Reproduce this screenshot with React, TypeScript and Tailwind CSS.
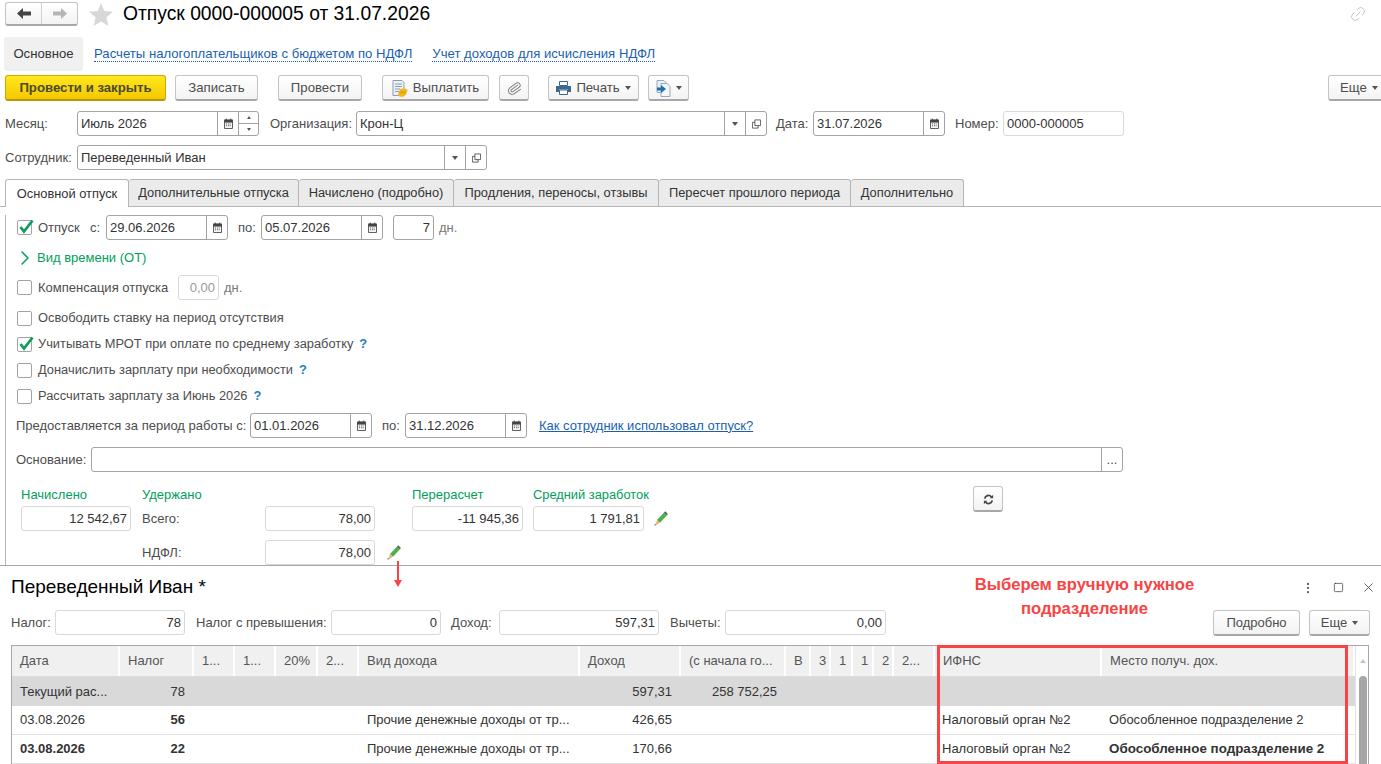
import type { ReactNode } from 'react'
import { MoreVertical, Paperclip, Square, X, Link2, ChevronRight } from 'lucide-react'

function Caret() {
  return <span className="inline-block w-0 h-0 border-x-[3px] border-x-transparent border-t-[4px] border-t-[#555]" />
}

function CalendarIcon() {
  return (
    <svg width="9" height="11" viewBox="0 0 10 12">
      <path d="M.5 2h9v9.500h-9z" fill="#fff" stroke="#444" />
      <path d="M.5 2h9v3h-9z" fill="#444" />
      <path d="M2.500 .5v2M7.500 .5v2" stroke="#444" />
      <path d="M2 6.500h1.500M4.500 6.500h1.500M7 6.500h1M2 8.500h1.500M4.500 8.500h1.500M7 8.500h1" stroke="#444" />
    </svg>
  )
}

function OpenIcon() {
  return (
    <svg width="9" height="10" viewBox="0 0 11 11" fill="none" stroke="#444">
      <path d="M3.500 .5h7v7h-7z" />
      <path d="M3.500 3.500h-3v7h7v-3" />
    </svg>
  )
}

function PencilIcon() {
  return (
    <svg width="14" height="15" viewBox="0 0 14 15">
      <path d="M3 9L10 1.500l3 2.700-7 7.500z" fill="#4caf50" />
      <path d="M10 1.500l1.200-1.200 2.600 2.600-.8 1.300z" fill="#555" />
      <path d="M3 9l3 2.700-4.600 2.500z" fill="#e8b26a" />
      <path d="M.9 13l1.400 1-1.800.5z" fill="#333" />
    </svg>
  )
}

function Field({
  w,
  value,
  right,
  disabled,
  plain,
  children,
}: {
  w: number
  value?: string
  right?: boolean
  disabled?: boolean
  plain?: boolean
  children?: ReactNode
}) {
  return (
    <div
      style={{ width: w }}
      className={`h-[25px] shrink-0 flex rounded-[3px] border bg-white ${plain || disabled ? 'border-[#d9d9d9]' : 'border-[#a3a3a3]'}`}
    >
      <div
        className={`flex-1 min-w-0 px-[3px] leading-[23px] whitespace-nowrap overflow-hidden ${right ? 'text-right' : ''} ${disabled ? 'text-[#999]' : 'text-[#333]'}`}
      >
        {value}
      </div>
      {children}
    </div>
  )
}

function FieldBtn({ children, w = 21 }: { children: ReactNode; w?: number }) {
  return <div style={{ width: w }} className="shrink-0 border-l border-[#a3a3a3] flex items-center justify-center">{children}</div>
}

function DateField({ w, value }: { w: number; value: string }) {
  return (
    <Field w={w} value={value}>
      <FieldBtn><CalendarIcon /></FieldBtn>
    </Field>
  )
}

function Btn({
  w,
  children,
  primary,
}: {
  w: number
  children: ReactNode
  primary?: boolean
}) {
  return (
    <div
      style={{ width: w }}
      className={`h-[26px] pt-px shrink-0 flex items-center justify-center gap-[5px] rounded-[3px] border border-b-2 ${
        primary
          ? 'bg-gradient-to-b from-[#ffe81c] to-[#f5c800] border-[#cfa800] border-b-[#b8970a] font-bold text-[#4a4a2a]'
          : 'bg-gradient-to-b from-white to-[#f3f3f3] border-[#c4c4c4] border-b-[#a8a8a8] text-[#4d4d4d]'
      }`}
    >
      {children}
    </div>
  )
}

function Check({ checked }: { checked?: boolean }) {
  return (
    <div className="relative w-[15px] h-[15px] shrink-0 rounded-[2px] border border-[#a3a3a3] bg-white">
      {checked && (
        <svg className="absolute left-[1px] top-[-2px]" width="15" height="15" viewBox="0 0 15 15" fill="none" stroke="#0f9d58" strokeWidth="2.800">
          <path d="M1.500 8l3.500 4.500L13.500 1.500" />
        </svg>
      )}
    </div>
  )
}

function CheckRow({ h, checked, label, hint }: { h: number; checked?: boolean; label: string; hint?: boolean }) {
  return (
    <div style={{ height: h }} className="flex items-center pl-[12px] text-[12.85px] text-[#4d4d4d]">
      <Check checked={checked} />
      <span className="ml-[6px]">{label}</span>
      {hint && <span className="ml-[6px] font-bold text-[#1a7fc1]">?</span>}
    </div>
  )
}

const columns = 'grid grid-cols-[108px_74px_41px_41px_42px_41px_221px_101px_105px_25px_20px_22px_21px_20px_41px_167px_253px]'

const headers = ['Дата', 'Налог', '1...', '1...', '20%', '2...', 'Вид дохода', 'Доход', '(с начала го...', 'В', '3', '1', '1', '2', '2...', 'ИФНС', 'Место получ. дох.']

function Cell({ children, right, bold, tight }: { children?: ReactNode; right?: boolean; bold?: boolean; tight?: boolean }) {
  return (
    <div className={`min-w-0 whitespace-nowrap overflow-hidden ${tight ? 'pl-[7px]' : 'pl-[8px]'} ${right ? 'text-right pr-[9px]' : ''} ${bold ? 'font-bold' : ''}`}>
      {children}
    </div>
  )
}

function DataRow({ boldDate, boldPlace, tax, income }: { boldDate?: boolean; boldPlace?: boolean; tax: string; income: string }) {
  return (
    <div className={`${columns} h-[29px] items-center border-b border-[#e3e3e3] text-[#333]`}>
      <Cell bold={boldDate}>03.08.2026</Cell>
      <Cell right bold>{tax}</Cell>
      <Cell /><Cell /><Cell /><Cell />
      <Cell>Прочие денежные доходы от тр...</Cell>
      <Cell right>{income}</Cell>
      <Cell /><Cell /><Cell /><Cell /><Cell /><Cell /><Cell />
      <Cell tight>Налоговый орган №2</Cell>
      <Cell tight bold={boldPlace}>
        <span className={boldPlace ? 'text-[13.4px]' : 'text-[12.9px]'}>Обособленное подразделение 2</span>
      </Cell>
    </div>
  )
}

export default function App() {
  return (
    <div className="relative w-[1381px] h-[764px] overflow-hidden bg-white text-[13px] font-['Liberation_Sans',Arial,sans-serif] text-[#4d4d4d]">
      <div className="h-[565px] overflow-hidden">
        {/* заголовок */}
        <div className="h-[24px] mt-[2px] flex items-center pl-[5px] pr-[14px]">
          <div className="w-[73px] h-[24px] flex rounded-[3px] border border-b-2 border-[#c4c4c4] border-b-[#a8a8a8] bg-gradient-to-b from-white to-[#f3f3f3]">
            <div className="w-[36px] flex items-center justify-center border-r border-[#d0d0d0]">
              <svg width="14" height="11" viewBox="0 0 14 11"><path d="M0 5.500L6 0v3.500h8v4H6V11z" fill="#444" /></svg>
            </div>
            <div className="flex-1 flex items-center justify-center">
              <svg width="14" height="11" viewBox="0 0 14 11"><path d="M14 5.500L8 0v3.500H0v4h8V11z" fill="#b5b5b5" /></svg>
            </div>
          </div>
          <svg className="ml-[11px]" width="24" height="23" viewBox="0 0 24 23"><path d="M12 0l3.300 8 8.700.7-6.600 5.600 2 8.700L12 18.400 4.600 23l2-8.700L0 8.700 8.700 8z" fill="#d8d8d8" /></svg>
          <div className="ml-[10px] text-[19.3px] text-black">Отпуск 0000-000005 от 31.07.2026</div>
          <Link2 size={18} strokeWidth={1} className="ml-auto text-[#b5b5b5] -rotate-45" />
        </div>

        {/* навигация формы */}
        <div className="h-[34px] mt-[11px] ml-[4px] flex items-center text-[13.15px]">
          <div className="w-[79px] h-[34px] rounded-[3px] bg-[#f0f0f0] flex items-center justify-center text-[#333]">Основное</div>
          <span className="ml-[11px] text-[#1b5fb0] border-b border-dotted border-[#1b5fb0] leading-[14px]">Расчеты налогоплательщиков с бюджетом по НДФЛ</span>
          <span className="ml-[20px] text-[#1b5fb0] border-b border-dotted border-[#1b5fb0] leading-[14px]">Учет доходов для исчисления НДФЛ</span>
        </div>

        {/* командная панель */}
        <div className="h-[26px] mt-[4px] ml-[5px] flex items-center text-[13.2px]">
          <Btn w={161} primary>Провести и закрыть</Btn>
          <div className="ml-[9px]"><Btn w={83}>Записать</Btn></div>
          <div className="ml-[20px]"><Btn w={84}>Провести</Btn></div>
          <div className="ml-[20px]">
            <Btn w={107}>
              <svg width="16" height="17" viewBox="0 0 16 17">
                <path d="M1 .5h9l2 2v13H1z" fill="#eef2f8" stroke="#8a9bb3" />
                <path d="M3 4h7M3 6.500h7M3 9h5M3 11.500h4" stroke="#8a9bb3" />
                <ellipse cx="11.500" cy="10.500" rx="4" ry="2" fill="#f2b90f" />
                <ellipse cx="10.500" cy="13" rx="4" ry="2" fill="#e7a50a" />
                <ellipse cx="9.500" cy="15" rx="3.500" ry="1.800" fill="#f2b90f" />
              </svg>
              Выплатить
            </Btn>
          </div>
          <div className="ml-[10px]"><Btn w={30}><Paperclip size={15} strokeWidth={1.500} className="text-[#777] rotate-[10deg]" /></Btn></div>
          <div className="ml-[19px]">
            <Btn w={91}>
              <svg width="15" height="14" viewBox="0 0 15 14">
                <path d="M3.500 .5h8v4h-8z" fill="#fff" stroke="#3c6a8f" />
                <path d="M0 5h15v6h-3V8.500H3V11H0z" fill="#3c6a8f" />
                <path d="M3.500 9h8v4.500h-8z" fill="#fff" stroke="#3c6a8f" />
              </svg>
              Печать
              <Caret />
            </Btn>
          </div>
          <div className="ml-[9px]">
            <Btn w={41}>
              <svg width="15" height="17" viewBox="0 0 15 17">
                <path d="M1 .5h7l3 3v9H1z" fill="#e9eef5" stroke="#9aa9bd" />
                <path d="M5 3.500h6l3 3v10H5z" fill="#f4f6fa" stroke="#9aa9bd" />
                <path d="M5 5l5 4-5 4v-2.500H1v-3h4z" fill="#1f6fb0" />
              </svg>
              <Caret />
            </Btn>
          </div>
          <div className="ml-auto -mr-[9px]"><Btn w={62}>Еще <Caret /></Btn></div>
        </div>

        {/* месяц, организация */}
        <div className="h-[25px] mt-[10px] flex items-center">
          <span className="ml-[5px] w-[72px] shrink-0">Месяц:</span>
          <Field w={182} value="Июль 2026">
            <FieldBtn><CalendarIcon /></FieldBtn>
            <div className="w-[20px] shrink-0 border-l border-[#a3a3a3] flex flex-col">
              <div className="flex-1 flex items-center justify-center border-b border-[#a3a3a3]">
                <span className="w-0 h-0 border-x-[2px] border-x-transparent border-b-[3px] border-b-[#555]" />
              </div>
              <div className="flex-1 flex items-center justify-center">
                <span className="w-0 h-0 border-x-[2px] border-x-transparent border-t-[3px] border-t-[#555]" />
              </div>
            </div>
          </Field>
          <span className="ml-[11px] w-[86px] shrink-0">Организация:</span>
          <Field w={411} value="Крон-Ц">
            <FieldBtn><Caret /></FieldBtn>
            <FieldBtn><OpenIcon /></FieldBtn>
          </Field>
          <span className="ml-[9px] w-[37px] shrink-0">Дата:</span>
          <DateField w={132} value="31.07.2026" />
          <span className="ml-[10px] w-[48px] shrink-0">Номер:</span>
          <Field w={121} value="0000-000005" plain />
        </div>

        {/* сотрудник */}
        <div className="h-[25px] mt-[9px] flex items-center">
          <span className="ml-[5px] w-[72px] shrink-0">Сотрудник:</span>
          <Field w={410} value="Переведенный Иван">
            <FieldBtn><Caret /></FieldBtn>
            <FieldBtn><OpenIcon /></FieldBtn>
          </Field>
        </div>

        {/* вкладки */}
        <div className="h-[28px] mt-[9px] relative flex pl-[5px] border-b border-[#b5b5b5] text-[12.85px]">
          <div className="w-[124px] h-[28px] bg-white border border-b-0 border-[#b5b5b5] rounded-t-[3px] flex items-center justify-center text-[#333]">Основной отпуск</div>
          {[
            ['Дополнительные отпуска', 170],
            ['Начислено (подробно)', 155],
            ['Продления, переносы, отзывы', 205],
            ['Пересчет прошлого периода', 192],
            ['Дополнительно', 113],
          ].map(([label, width]) => (
            <div
              key={label}
              style={{ width: width as number }}
              className="h-[27px] bg-[#ebebeb] border border-l-0 border-b-0 border-[#b5b5b5] rounded-t-[3px] flex items-center justify-center text-[#333]"
            >
              {label}
            </div>
          ))}
        </div>

        {/* содержимое вкладки */}
        <div className="ml-[5px] border-l border-[#b5b5b5] h-[358px]">
          <div className="h-[25px] mt-[8px] flex items-center pl-[11px]">
            <Check checked />
            <span className="ml-[6px] w-[52px] shrink-0">Отпуск</span>
            <span className="w-[16px] shrink-0">с:</span>
            <DateField w={122} value="29.06.2026" />
            <span className="ml-[10px] w-[23px] shrink-0">по:</span>
            <DateField w={122} value="05.07.2026" />
            <div className="ml-[10px]"><Field w={41} value="7" right /></div>
            <span className="ml-[5px] text-[#777]">дн.</span>
          </div>
          <div className="h-[24px] mt-[6px] flex items-center pl-[7px] text-[#00a05a]">
            <ChevronRight size={24} strokeWidth={1.500} />
            <span>Вид времени (ОТ)</span>
          </div>
          <div className="h-[25px] mt-[5px] flex items-center pl-[11px]">
            <Check />
            <span className="ml-[6px] w-[140px] shrink-0">Компенсация отпуска</span>
            <Field w={41} value="0,00" right disabled />
            <span className="ml-[5px] text-[#777]">дн.</span>
          </div>
          <div className="-ml-px mt-[5px]">
            <CheckRow h={26} label="Освободить ставку на период отсутствия" />
            <CheckRow h={26} checked label="Учитывать МРОТ при оплате по среднему заработку" hint />
            <CheckRow h={26} label="Доначислить зарплату при необходимости" hint />
            <CheckRow h={26} label="Рассчитать зарплату за Июнь 2026" hint />
          </div>
          <div className="h-[25px] mt-[4px] flex items-center pl-[10px]">
            <span className="w-[234px] shrink-0">Предоставляется за период работы с:</span>
            <DateField w={122} value="01.01.2026" />
            <span className="ml-[10px] w-[23px] shrink-0">по:</span>
            <DateField w={122} value="31.12.2026" />
            <span className="ml-[12px] text-[#1b5fb0] underline">Как сотрудник использовал отпуск?</span>
          </div>
          <div className="h-[25px] mt-[9px] flex items-center pl-[10px]">
            <span className="w-[75px] shrink-0">Основание:</span>
            <Field w={1032}>
              <FieldBtn>...</FieldBtn>
            </Field>
          </div>

          {/* итоги */}
          <div className="mt-[14px] flex items-start pl-[15px]">
            <div className="w-[121px] shrink-0">
              <div className="h-[20px] text-[#00a05a] leading-[18px]">Начислено</div>
              <Field w={110} value="12 542,67" right plain />
            </div>
            <div className="w-[270px] shrink-0">
              <div className="h-[20px] text-[#00a05a] leading-[18px]">Удержано</div>
              <div className="flex h-[25px] items-center">
                <span className="w-[123px] shrink-0">Всего:</span>
                <Field w={110} value="78,00" right plain />
              </div>
              <div className="flex h-[25px] mt-[9px] items-center">
                <span className="w-[123px] shrink-0">НДФЛ:</span>
                <Field w={110} value="78,00" right plain />
                <span className="ml-[12px]"><PencilIcon /></span>
              </div>
            </div>
            <div className="w-[121px] shrink-0">
              <div className="h-[20px] text-[#00a05a] leading-[18px]">Перерасчет</div>
              <Field w={111} value="-11 945,36" right plain />
            </div>
            <div className="w-[440px] shrink-0">
              <div className="h-[20px] text-[#00a05a] leading-[18px] text-[12.85px]">Средний заработок</div>
              <div className="flex items-center">
                <Field w={111} value="1 791,81" right plain />
                <span className="ml-[10px]"><PencilIcon /></span>
              </div>
            </div>
            <Btn w={30}>
              <svg width="11" height="11" viewBox="0 0 13 13" fill="none" stroke="#444" strokeWidth="2">
                <path d="M2 5.500A4.500 4.500 0 0 1 10 3.500" />
                <path d="M11 7.500A4.500 4.500 0 0 1 3 9.500" />
                <path d="M12 1v4H8z" fill="#444" stroke="none" />
                <path d="M1 12V8h4z" fill="#444" stroke="none" />
              </svg>
            </Btn>
          </div>
        </div>
      </div>

      {/* нижняя панель */}
      <div className="h-[199px] border-t border-[#a8a8a8] bg-white overflow-hidden">
        <div className="h-[42px] flex items-center pl-[11px] pr-[5px] pt-[1px]">
          <span className="text-[19px] text-black">Переведенный Иван *</span>
          <MoreVertical size={14} strokeWidth={2} className="ml-auto text-[#666]" />
          <Square size={11} strokeWidth={1.500} className="ml-[18px] text-[#333]" />
          <X size={15} strokeWidth={1.200} className="ml-[17px] text-[#333]" />
        </div>
        <div className="h-[25px] mt-[2px] flex items-center pl-[11px]">
          <span className="w-[44px] shrink-0">Налог:</span>
          <Field w={130} value="78" right plain />
          <span className="ml-[11px] w-[135px] shrink-0">Налог с превышения:</span>
          <Field w={110} value="0" right plain />
          <span className="ml-[10px] w-[48px] shrink-0">Доход:</span>
          <Field w={160} value="597,31" right plain />
          <span className="ml-[11px] w-[55px] shrink-0">Вычеты:</span>
          <Field w={161} value="0,00" right plain />
          <div className="ml-[327px]"><Btn w={87}>Подробно</Btn></div>
          <div className="ml-[9px]"><Btn w={61}>Еще <Caret /></Btn></div>
        </div>

        <div className="ml-[11px] w-[1358px] mt-[10px] border border-[#a8a8a8] flex">
          <div className="w-[1343px] shrink-0">
            <div className={`${columns} h-[31px] bg-[#f0f0f0] border-b border-[#dcdcdc]`}>
              {headers.map((h, i) => (
                <div key={i} className="border-r-2 border-white pl-[8px] leading-[29px] whitespace-nowrap overflow-hidden text-[#555]">
                  {h}
                </div>
              ))}
            </div>
            <div className={`${columns} h-[29px] items-center bg-[#d9d9d9] text-[#333]`}>
              <Cell>Текущий рас...</Cell>
              <Cell right>78</Cell>
              <Cell /><Cell /><Cell /><Cell /><Cell />
              <Cell right>597,31</Cell>
              <Cell right>258 752,25</Cell>
            </div>
            <DataRow tax="56" income="426,65" />
            <DataRow boldDate boldPlace tax="22" income="170,66" />
          </div>
          <div className="relative flex-1 border-l border-[#e3e3e3]">
            <span className="absolute left-[4px] top-[13px] w-0 h-0 border-x-[3px] border-x-transparent border-b-[4px] border-b-[#c4c4c4]" />
            <div className="absolute left-[3px] top-[30px] w-[8px] h-[100px] rounded-[4px] bg-[#a6a6a6]" />
          </div>
        </div>
      </div>

      {/* пометки поверх формы */}
      <div className="absolute left-[397px] top-[561px] w-[2px] h-[20px] bg-[#f84444]" />
      <div className="absolute left-[394px] top-[580px] w-0 h-0 border-x-[4px] border-x-transparent border-t-[7px] border-t-[#f84444]" />
      <div className="absolute left-[965px] top-[573px] w-[239px] text-center text-[16.600px] leading-[24px] font-bold text-[#f84444]">
        Выберем вручную нужное подразделение
      </div>
      <div className="absolute left-[937px] top-[645px] w-[411px] h-[119px] border-[3px] border-[#f84444]" />
    </div>
  )
}
